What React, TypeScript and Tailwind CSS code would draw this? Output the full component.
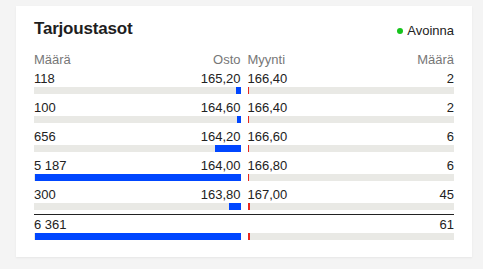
import React from "react";

type Row = { bq: string; bqn: number; bid: string; ask: string; aq: string; aqn: number };

const rows: Row[] = [
  { bq: "118", bqn: 118, bid: "165,20", ask: "166,40", aq: "2", aqn: 2 },
  { bq: "100", bqn: 100, bid: "164,60", ask: "166,40", aq: "2", aqn: 2 },
  { bq: "656", bqn: 656, bid: "164,20", ask: "166,60", aq: "6", aqn: 6 },
  { bq: "5 187", bqn: 5187, bid: "164,00", ask: "166,80", aq: "6", aqn: 6 },
  { bq: "300", bqn: 300, bid: "163,80", ask: "167,00", aq: "45", aqn: 45 },
];

const max = 5187;

function Bars({ b, a, m }: { b: number; a: number; m: number }) {
  const bw = Math.max(1, Math.round((b / m) * 206));
  const aw = Math.max(1, Math.round((a / m) * 206));
  return (
    <div className="grid grid-cols-2 gap-[7px]">
      <div className="h-[7px] bg-[#e9e9e5] flex justify-end">
        <div className="h-full bg-[#0046ff]" style={{ width: bw }} />
      </div>
      <div className="h-[7px] bg-[#e9e9e5] flex justify-start">
        <div className="h-full bg-[#e8261e]" style={{ width: aw }} />
      </div>
    </div>
  );
}

export default function App() {
  return (
    <div
      className="w-[483px] h-[269px] bg-[#f4f4f4] pt-[6px] pl-[16px]"
      style={{ fontFamily: '"Liberation Sans", Arial, sans-serif' }}
    >
      <div className="w-[456px] h-[251px] bg-white shadow-[0_1px_2px_rgba(0,0,0,0.06)] px-[18px] pt-[11px]">
        <div className="flex items-baseline justify-between h-[24px] leading-[24px]">
          <div className="text-[17px] font-bold text-[#1e1e1e] tracking-[-0.2px]">Tarjoustasot</div>
          <div className="flex items-center text-[13px] text-[#222]">
            <span className="inline-block w-[6px] h-[6px] rounded-full bg-[#16c41c] mr-[4px]" />
            Avoinna
          </div>
        </div>
        <div className="mt-[11px] grid grid-cols-2 gap-[7px] text-[13px] leading-[16px] text-[#777]">
          <div className="flex justify-between">
            <span>Määrä</span>
            <span>Osto</span>
          </div>
          <div className="flex justify-between">
            <span>Myynti</span>
            <span>Määrä</span>
          </div>
        </div>
        <div className="mt-[3px] text-[13px] leading-[16px] text-[#222]">
          {rows.map((r, i) => (
            <div key={i} className={i < rows.length - 1 ? "mb-[6px]" : "mb-[4px]"}>
              <div className="grid grid-cols-2 gap-[7px]">
                <div className="flex justify-between">
                  <span>{r.bq}</span>
                  <span>{r.bid}</span>
                </div>
                <div className="flex justify-between">
                  <span>{r.ask}</span>
                  <span>{r.aq}</span>
                </div>
              </div>
              <Bars b={r.bqn} a={r.aqn} m={max} />
            </div>
          ))}
          <div className="border-t border-[#222] pt-[2px]">
            <div className="flex justify-between">
              <span>6 361</span>
              <span>61</span>
            </div>
            <Bars b={6361} a={61} m={6361} />
          </div>
        </div>
      </div>
    </div>
  );
}
